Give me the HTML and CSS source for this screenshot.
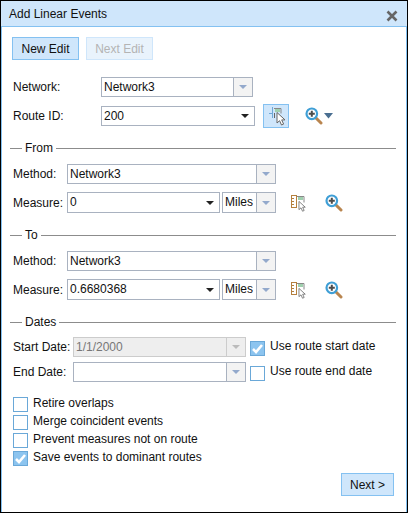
FILE: index.html
```html
<!DOCTYPE html>
<html lang="en">
<head>
    <meta charset="UTF-8">
    <meta name="viewport" content="width=device-width, initial-scale=1.0">
    <title>Add Linear Events</title>
    <link rel="stylesheet" href="styles.css">
</head>
<body>
    <svg class="defs" width="0" height="0">
        <symbol id="zoom-in" viewBox="0 0 18 18">
            <path d="M10.500 10.500l5.500 5.500" stroke="#b9854f" stroke-width="3" stroke-linecap="round"/>
            <circle cx="6.800" cy="6.800" r="5.300" fill="#fff" stroke="#3f9fd6" stroke-width="2.200"/>
            <path d="M6.800 3.800v6M3.800 6.800h6" stroke="#4c4c4c" stroke-width="2"/>
        </symbol>
        <symbol id="cursor" viewBox="0 0 11 14">
            <path d="M1 .5v10.500l2.600-2.300 1.900 4.300 2.100-.9-1.900-4.200h3.300z" fill="#fff" stroke="#666"/>
        </symbol>
        <symbol id="check" viewBox="0 0 15 15">
            <path d="M3 8l3 3 6-7" fill="none" stroke="#fff" stroke-width="2.600"/>
        </symbol>
        <symbol id="measure" viewBox="0 0 18 18">
            <rect x="1.500" y="1.500" width="5" height="12" fill="#fff" stroke="#b5803f"/>
            <path d="M2 4.500h2M2 7.500h2M2 10.500h2" stroke="#b5803f"/>
            <path d="M7 2.500h7v6" stroke="#888" fill="none"/>
            <rect x="8" y="3" width="5" height="3" fill="#9fd0ae"/>
            <use href="#cursor" x="8" y="7" width="9" height="11"/>
        </symbol>
    </svg>

    <div class="dialog">
        <div class="title-bar">
            <span>Add Linear Events</span>
            <svg class="close" width="12" height="12" viewBox="0 0 12 12"><path d="M1.500 1.500l9 9M10.500 1.500l-9 9" stroke="#666" stroke-width="2.600"/></svg>
        </div>

        <div class="content">
            <div class="top-buttons">
                <button class="btn">New Edit</button>
                <button class="btn disabled">Next Edit</button>
            </div>

            <div class="row network-row">
                <label class="lbl-wide">Network:</label>
                <div class="combo network-combo"><span class="val">Network3</span><span class="arrow"><i></i></span></div>
            </div>
            <div class="row route-row">
                <label class="lbl-wide">Route ID:</label>
                <div class="combo route-combo editable"><span class="val">200</span><span class="arrow"><i></i></span></div>
                <button class="tool-btn">
                    <svg width="20" height="20" viewBox="0 0 20 20">
                        <path d="M3 7.500h3.500M6.500 1v11" stroke="#6fa8d6" fill="none"/>
                        <path d="M8 2.500h7v5" stroke="#888" fill="none"/>
                        <rect x="9" y="3" width="5" height="3" fill="#9fd0ae"/>
                        <rect x="8" y="7" width="1" height="5" fill="#666"/>
                        <use href="#cursor" x="10" y="6" width="11" height="14"/>
                    </svg>
                </button>
                <svg class="zoom-icon" width="18" height="18"><use href="#zoom-in"/></svg>
                <svg class="zoom-arrow" width="9" height="6" viewBox="0 0 9 6"><path d="M0 0h9L4.500 5.500z" fill="#4a6f91"/></svg>
            </div>

            <fieldset class="group">
                <legend>From</legend>
                <div class="row">
                    <label class="lbl">Method:</label>
                    <div class="combo method-combo"><span class="val">Network3</span><span class="arrow"><i></i></span></div>
                </div>
                <div class="row measure-row">
                    <label class="lbl">Measure:</label>
                    <div class="combo measure-combo editable"><span class="val">0</span><span class="arrow"><i></i></span></div>
                    <div class="combo unit-combo"><span class="val">Miles</span><span class="arrow"><i></i></span></div>
                    <svg class="measure-icon" width="18" height="18"><use href="#measure"/></svg>
                    <svg class="measure-zoom" width="18" height="18"><use href="#zoom-in"/></svg>
                </div>
            </fieldset>

            <fieldset class="group">
                <legend>To</legend>
                <div class="row">
                    <label class="lbl">Method:</label>
                    <div class="combo method-combo"><span class="val">Network3</span><span class="arrow"><i></i></span></div>
                </div>
                <div class="row measure-row">
                    <label class="lbl">Measure:</label>
                    <div class="combo measure-combo editable"><span class="val">0.6680368</span><span class="arrow"><i></i></span></div>
                    <div class="combo unit-combo"><span class="val">Miles</span><span class="arrow"><i></i></span></div>
                    <svg class="measure-icon" width="18" height="18"><use href="#measure"/></svg>
                    <svg class="measure-zoom" width="18" height="18"><use href="#zoom-in"/></svg>
                </div>
            </fieldset>

            <fieldset class="group dates-group">
                <legend>Dates</legend>
                <div class="row date-row">
                    <label class="lbl-date">Start Date:</label>
                    <div class="combo date-combo is-disabled"><span class="val">1/1/2000</span><span class="arrow"><i></i></span></div>
                    <span class="box checked"><svg width="15" height="15"><use href="#check"/></svg></span>
                    <span class="date-check">Use route start date</span>
                </div>
                <div class="row date-row">
                    <label class="lbl-date">End Date:</label>
                    <div class="combo date-combo"><span class="val"></span><span class="arrow"><i></i></span></div>
                    <span class="box"></span>
                    <span class="date-check">Use route end date</span>
                </div>
            </fieldset>

            <div class="options">
                <div class="option"><span class="box"></span><span>Retire overlaps</span></div>
                <div class="option"><span class="box"></span><span>Merge coincident events</span></div>
                <div class="option"><span class="box"></span><span>Prevent measures not on route</span></div>
                <div class="option"><span class="box checked"><svg width="15" height="15"><use href="#check"/></svg></span><span>Save events to dominant routes</span></div>
            </div>

            <div class="footer">
                <button class="btn next-btn">Next &gt;</button>
            </div>
        </div>
    </div>
</body>
</html>
```

FILE: styles.css
```css
html, body {
    margin: 0;
    padding: 0;
    background: #fff;
}
body {
    width: 408px;
    height: 513px;
    overflow: hidden;
    font-family: "Liberation Sans", Arial, sans-serif;
    font-size: 12px;
    color: #111;
}
.defs {
    position: absolute;
}
.dialog {
    box-sizing: border-box;
    width: 408px;
    height: 513px;
    border: 1px solid #000;
    display: flex;
    flex-direction: column;
}
.title-bar {
    box-sizing: border-box;
    height: 26px;
    flex: none;
    background: #cfe6fb;
    border-bottom: 1px solid #84c1f1;
    padding: 0 8px;
    display: flex;
    align-items: center;
    justify-content: space-between;
}
.close {
    margin-top: 4px;
    margin-right: 1px;
}
.content {
    flex: 1;
    border-left: 1px solid #84c1f1;
    border-right: 1px solid #84c1f1;
    padding: 10px 11px 0 10px;
    display: flex;
    flex-direction: column;
    min-height: 0;
}
.top-buttons {
    display: flex;
    gap: 7px;
    margin-bottom: 17px;
}
.btn {
    box-sizing: border-box;
    width: 67px;
    height: 23px;
    padding: 0;
    background: #cfe6fb;
    border: 1px solid #84c1f1;
    font-family: inherit;
    font-size: 12px;
    color: #111;
}
.btn.disabled {
    background: #e9f3fc;
    border-color: #cfe6fb;
    color: #b4b4b4;
}
.row {
    display: flex;
    align-items: center;
}
.network-row {
    height: 20px;
    margin-bottom: 9px;
}
.lbl-wide {
    width: 88px;
    margin-left: 1px;
}
.route-row {
    height: 20px;
}
.combo {
    box-sizing: border-box;
    height: 20px;
    flex: none;
    display: flex;
    border: 1px solid #a9b2c0;
    background: #fff;
}
.val {
    flex: 1;
    padding-left: 2px;
    line-height: 18px;
    white-space: nowrap;
    overflow: hidden;
}
.arrow {
    width: 18px;
    flex: none;
    border-left: 1px solid #a9b2c0;
    background: #f3f3f3;
    display: flex;
    align-items: center;
    justify-content: center;
}
.arrow i {
    width: 0;
    height: 0;
    border-left: 4px solid transparent;
    border-right: 4px solid transparent;
    border-top: 4px solid #93a9cc;
}
.editable .arrow {
    border-left: none;
    background: #fff;
}
.editable .arrow i {
    border-top-color: #222;
}
.network-combo {
    width: 152px;
}
.route-combo {
    width: 154px;
}
.tool-btn {
    box-sizing: border-box;
    width: 26px;
    height: 24px;
    padding: 0;
    margin-left: 8px;
    background: #cfe6fb;
    border: 1px solid #84c1f1;
    display: flex;
    align-items: center;
    justify-content: center;
}
.zoom-icon {
    margin-left: 16px;
}
.zoom-arrow {
    margin-left: 1px;
}
.group {
    margin: 15px -1px 0 -2px;
    padding: 0;
    border: none;
    border-top: 1px solid #8c8c8c;
    min-width: 0;
}
.group legend {
    margin-left: 12px;
    padding: 0 3px;
    line-height: 14px;
}
.group .row {
    height: 20px;
}
.group .measure-row {
    height: 21px;
    margin-top: 8px;
}
.measure-row .combo {
    height: 21px;
}
.group legend + .row {
    margin-top: 9px;
}
.lbl {
    width: 54px;
    margin-left: 3px;
    white-space: nowrap;
}
.method-combo {
    width: 209px;
}
.measure-combo {
    width: 153px;
}
.unit-combo {
    width: 54px;
    margin-left: 2px;
}
.measure-icon {
    margin-left: 14px;
}
.measure-zoom {
    margin-left: 17px;
}
.dates-group legend + .row {
    margin-top: 8px;
}
.dates-group .row + .row {
    margin-top: 5px;
}
.lbl-date {
    width: 60px;
    margin-left: 3px;
    white-space: nowrap;
}
.date-combo {
    width: 173px;
}
.date-combo.is-disabled {
    background: #eee;
    border-color: #ccc;
    color: #777;
}
.date-combo.is-disabled .arrow {
    background: #eee;
    border-left-color: #ccc;
}
.date-combo.is-disabled .arrow i {
    border-top-color: #bbb;
}
.box {
    box-sizing: border-box;
    width: 15px;
    height: 15px;
    flex: none;
    display: block;
    border: 1px solid #6aa8d8;
    background: #fff;
}
.box svg {
    display: block;
    margin: -1px;
}
.box.checked {
    background: #8cc4ef;
}
.date-row .box {
    margin-left: 4px;
    margin-top: 3px;
}
.date-check {
    margin-left: 5px;
    margin-top: -2px;
}
.options {
    margin-top: 15px;
    margin-left: 1px;
    display: flex;
    flex-direction: column;
    gap: 3px;
}
.option {
    display: flex;
    gap: 5px;
    height: 15px;
    line-height: 12px;
}
.footer {
    display: flex;
    justify-content: flex-end;
    margin-top: 7px;
    margin-right: 1px;
}
.next-btn {
    width: 53px;
}
```
